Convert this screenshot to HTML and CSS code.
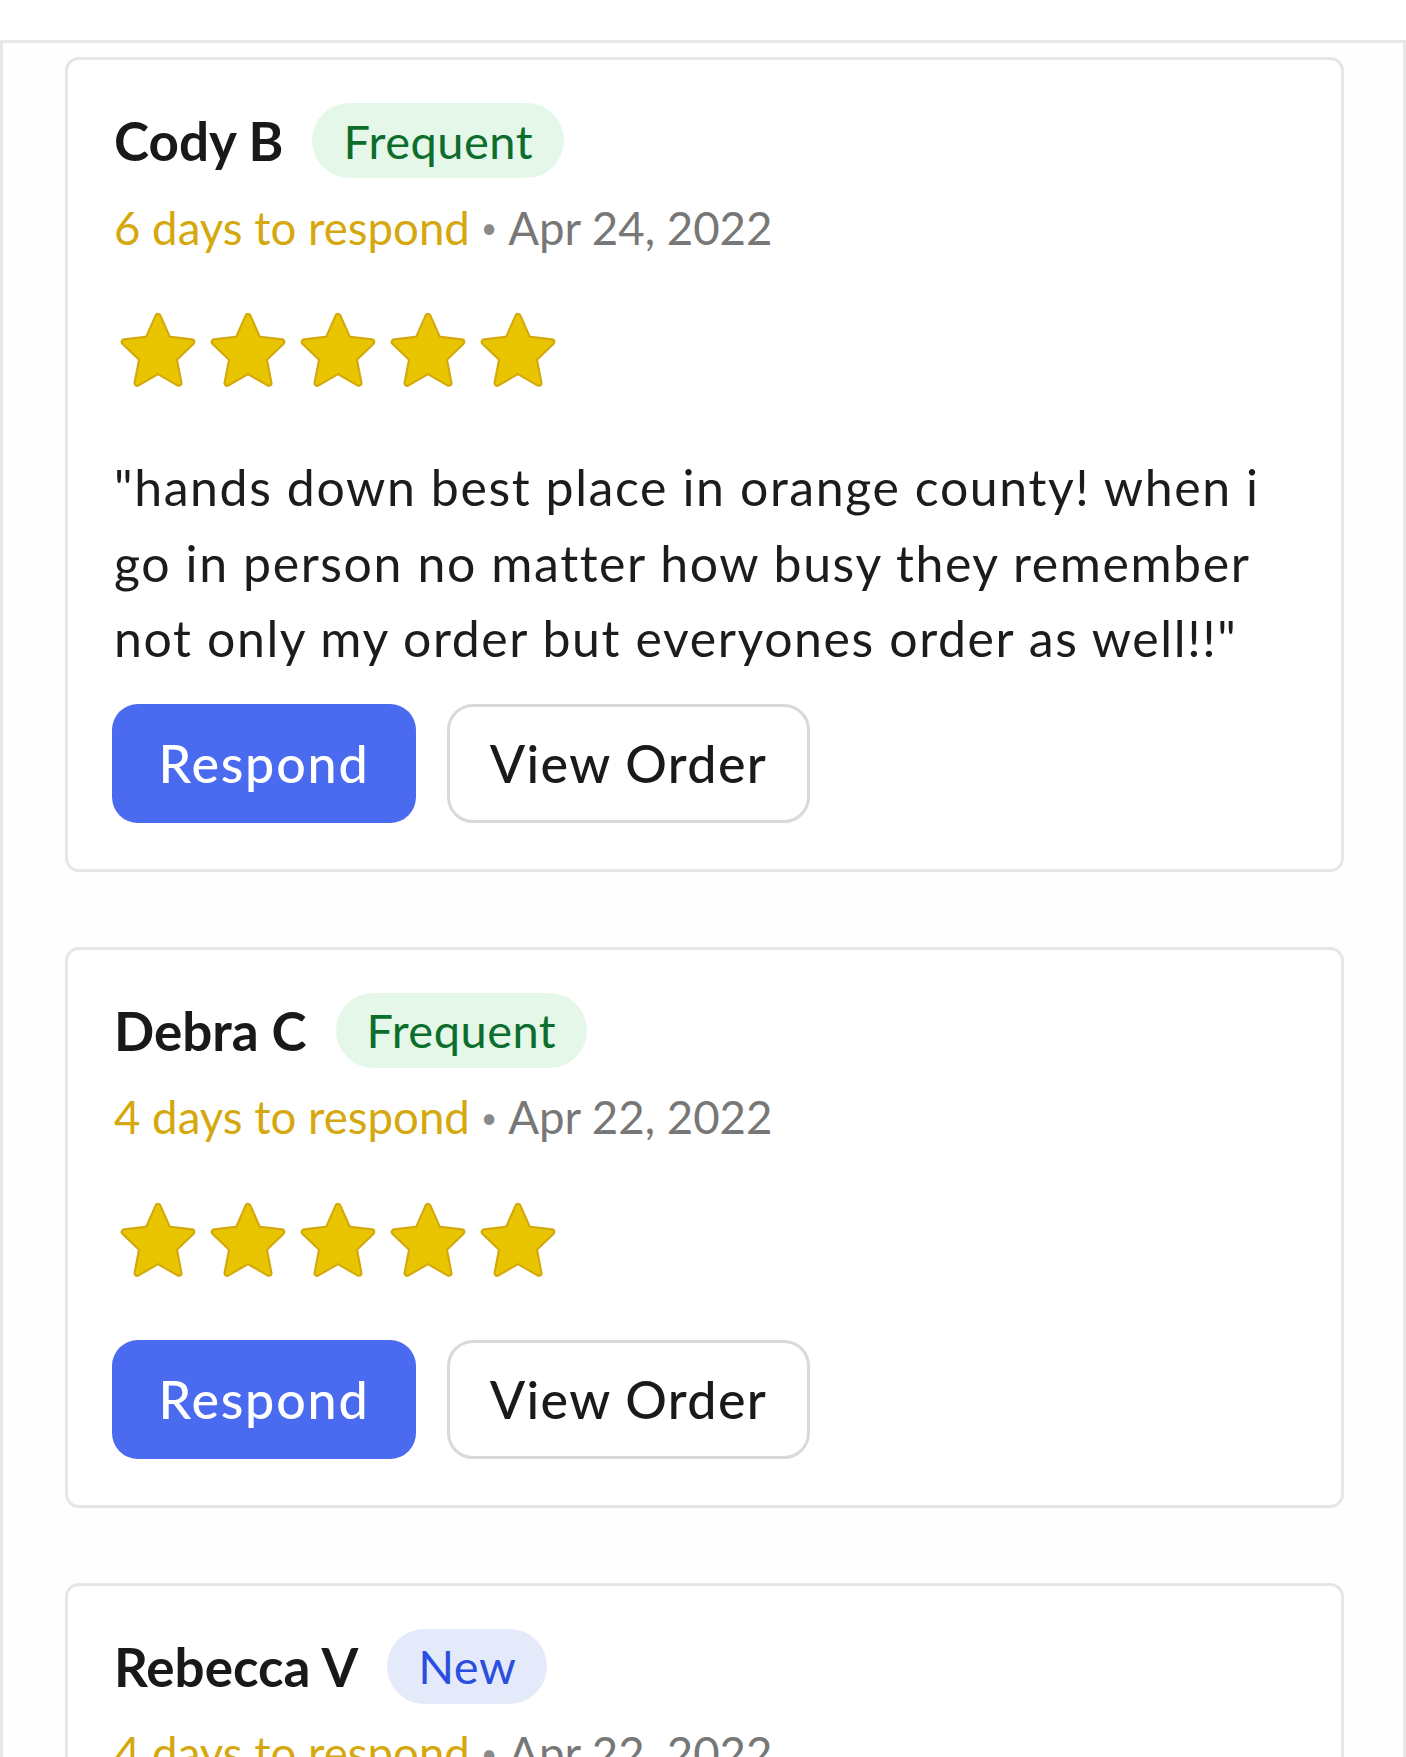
FILE: index.html
```html
<!DOCTYPE html>
<html lang="en">
<head>
<meta charset="utf-8">
<title>Reviews</title>
<link rel="stylesheet" href="styles.css">
</head>
<body>
<svg class="defs" width="0" height="0" aria-hidden="true">
  <defs>
    <path id="star" d="M12 2.86 L14.65 8.85 L20.94 9.62 L16.28 14.08 L17.53 20.54 L12 17.32 L6.47 20.54 L7.72 14.08 L3.06 9.62 L9.35 8.85 Z"/>
    <g id="star-full">
      <use href="#star" class="star-edge"/>
      <use href="#star" class="star-body"/>
    </g>
  </defs>
</svg>
<main class="panel">
  <article class="card">
    <div class="head">
      <span class="name">Cody B</span>
      <span class="badge badge-green">Frequent</span>
    </div>
    <div class="meta"><span class="wait">6 days to respond</span><span class="dot">•</span><span class="date">Apr 24, 2022</span></div>
    <div class="stars">
      <svg class="star" viewBox="0 0 24 24"><use href="#star-full"/></svg>
      <svg class="star" viewBox="0 0 24 24"><use href="#star-full"/></svg>
      <svg class="star" viewBox="0 0 24 24"><use href="#star-full"/></svg>
      <svg class="star" viewBox="0 0 24 24"><use href="#star-full"/></svg>
      <svg class="star" viewBox="0 0 24 24"><use href="#star-full"/></svg>
    </div>
    <p class="review">"hands down best place in orange county! when i go in person no matter how busy they remember not only my order but everyones order as well!!"</p>
    <div class="actions">
      <button class="btn btn-primary">Respond</button>
      <button class="btn btn-outline">View Order</button>
    </div>
  </article>

  <article class="card">
    <div class="head">
      <span class="name">Debra C</span>
      <span class="badge badge-green">Frequent</span>
    </div>
    <div class="meta"><span class="wait">4 days to respond</span><span class="dot">•</span><span class="date">Apr 22, 2022</span></div>
    <div class="stars">
      <svg class="star" viewBox="0 0 24 24"><use href="#star-full"/></svg>
      <svg class="star" viewBox="0 0 24 24"><use href="#star-full"/></svg>
      <svg class="star" viewBox="0 0 24 24"><use href="#star-full"/></svg>
      <svg class="star" viewBox="0 0 24 24"><use href="#star-full"/></svg>
      <svg class="star" viewBox="0 0 24 24"><use href="#star-full"/></svg>
    </div>
    <div class="actions">
      <button class="btn btn-primary">Respond</button>
      <button class="btn btn-outline">View Order</button>
    </div>
  </article>

  <article class="card">
    <div class="head">
      <span class="name">Rebecca V</span>
      <span class="badge badge-blue">New</span>
    </div>
    <div class="meta"><span class="wait">4 days to respond</span><span class="dot">•</span><span class="date">Apr 22, 2022</span></div>
    <div class="stars">
      <svg class="star" viewBox="0 0 24 24"><use href="#star-full"/></svg>
      <svg class="star" viewBox="0 0 24 24"><use href="#star-full"/></svg>
      <svg class="star" viewBox="0 0 24 24"><use href="#star-full"/></svg>
      <svg class="star" viewBox="0 0 24 24"><use href="#star-full"/></svg>
      <svg class="star" viewBox="0 0 24 24"><use href="#star-full"/></svg>
    </div>
    <div class="actions">
      <button class="btn btn-primary">Respond</button>
      <button class="btn btn-outline">View Order</button>
    </div>
  </article>
</main>
</body>
</html>
```
FILE: styles.css
```css
* { box-sizing: border-box; }

html, body {
  margin: 0;
  padding: 0;
  background: #ffffff;
}

body {
  font-family: "Lato", "Liberation Sans", sans-serif;
  color: #1a1a1a;
  overflow: hidden;
}

.defs {
  position: absolute;
  width: 0;
  height: 0;
}

.panel {
  margin-top: 40px;
  border-top: 3px solid #e7e7e7;
  border-left: 3px solid #e7e7e7;
  border-right: 3px solid #e7e7e7;
  background: #fefefe;
  padding: 14px 59px 0 62px;
  display: flex;
  flex-direction: column;
  gap: 75px;
}

.card {
  background: #ffffff;
  border: 3px solid #e6e6e6;
  border-radius: 14px;
  padding: 43px 46px 46px 46px;
  display: flex;
  flex-direction: column;
  align-items: flex-start;
}

.head {
  display: flex;
  align-items: center;
  gap: 29px;
  height: 75px;
}

.name {
  font-size: 53px;
  font-weight: 700;
  color: #191919;
}

.badge {
  height: 75px;
  display: inline-flex;
  align-items: center;
  padding: 0 31px;
  border-radius: 38px;
  font-size: 47px;
  font-weight: 400;
  letter-spacing: 0.5px;
}

.badge-green {
  background: #e4f7e9;
  color: #0c6d2c;
}

.badge-blue {
  background: #e5eafa;
  color: #2a4fe0;
}

.meta {
  margin-top: 19px;
  height: 60px;
  display: flex;
  align-items: center;
  font-size: 45.6px;
}

.wait { color: #d4a80e; }
.dot {
  color: #8a8a8a;
  font-size: 28px;
  margin: 0 11px;
}
.date { color: #777777; }

.stars {
  margin-top: 49px;
  display: flex;
  gap: 0;
  margin-left: -1px;
}

.star {
  width: 90px;
  height: 90px;
  display: block;
}

.star-edge {
  fill: #d3a80b;
  stroke: #d3a80b;
  stroke-width: 2;
  stroke-linejoin: round;
}

.star-body {
  fill: #e9c400;
  stroke: #e9c400;
  stroke-width: 0.9;
  stroke-linejoin: round;
}

.review {
  margin: 54px 0 0 0;
  font-size: 50px;
  line-height: 75.5px;
  letter-spacing: 1.6px;
  color: #1c1c1c;
}

.stars + .actions { margin-top: 54px; }

.actions {
  margin-top: 27px;
  margin-left: -2px;
  display: flex;
  gap: 31px;
}

.btn {
  height: 119px;
  font-family: inherit;
  font-size: 52px;
  font-weight: 500;
  letter-spacing: 1.8px;
  border-radius: 26px;
  padding: 0;
  white-space: nowrap;
  cursor: pointer;
}

.btn-primary {
  background: #4a6bef;
  color: #ffffff;
  border: none;
  width: 304px;
}

.btn-outline {
  background: #ffffff;
  color: #1a1a1a;
  border: 3px solid #d9d9d9;
  width: 363px;
  letter-spacing: 1.4px;
}
```
